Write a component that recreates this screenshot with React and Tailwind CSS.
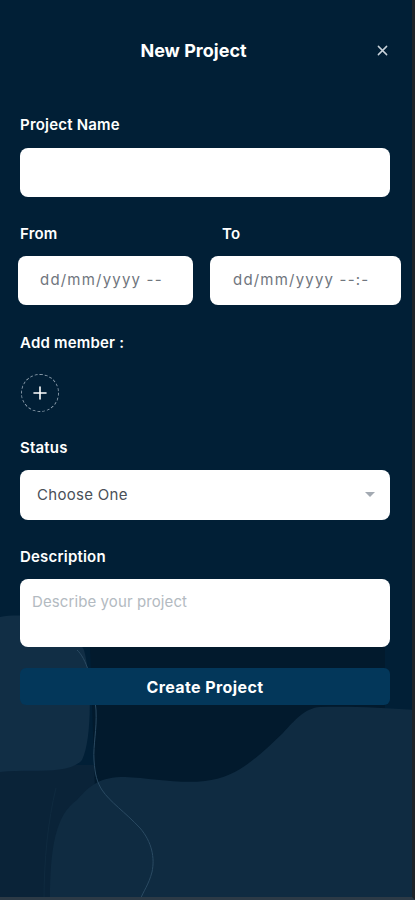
import React from "react";

// decorative waves behind the lower part of the form
function Backdrop() {
  return (
    <svg
      className="pointer-events-none absolute left-0 top-[600px] h-[300px] w-[415px]"
      viewBox="0 0 415 300"
      fill="none"
    >
      <path d="M0,165 L110,165 L110,300 L0,300 Z" fill="#0a2338" />
      <path
        d="M0,17 C30,12 70,20 84,50 C92,80 92,140 82,160 C68,176 30,168 0,172 Z"
        fill="#112e45"
      />
      <path d="M90,45 L385,45 L385,112 L200,190 L95,190 Z" fill="#021a2d" />
      <path
        d="M50,300 C50,250 55,215 77,200 C90,185 100,177 125,177 C150,178 180,184 205,181 C235,178 255,160 283,133 C295,120 305,108 320,107 C350,106 390,108 415,110 L415,300 Z"
        fill="#0f2b41"
      />
      <path
        d="M77,50 C86,58 93,80 96,110 C97,130 93,145 94,160 C95,175 97,182 102,190 C110,202 125,212 140,228 C152,242 155,258 152,272 C149,284 143,292 140,300"
        stroke="#2a4a62"
        strokeWidth="1"
      />
      <path d="M56,188 C48,220 44,260 44,300" stroke="#0f2a3f" strokeWidth="1" />
    </svg>
  );
}

function Label({ children, className = "" }) {
  return (
    <div className={"text-[15px] leading-5 font-semibold tracking-[0.2px] text-white " + className}>
      {children}
    </div>
  );
}

export default function App() {
  return (
    <div
      className="relative min-h-[900px] w-full overflow-hidden bg-[#011f36] border-r-[3px] border-b-[3px] border-r-[#1e2328] border-b-[#2c3a46]"
      style={{ fontFamily: "Inter, 'Open Sans', sans-serif" }}
    >
      <Backdrop />

      <div className="relative z-10 pl-5 pr-[22px]">
        {/* header */}
        <div className="flex h-[100px] items-center">
          <h1 className="flex-1 pr-[3px] text-center text-[18px] font-bold text-white">New Project</h1>
          <button className="mr-[-4px] flex h-6 w-6 items-center justify-center text-[#c9d2da]">
            <svg width="11" height="11" viewBox="0 0 12 12" stroke="currentColor" strokeWidth="1.6" strokeLinecap="round">
              <path d="M1.5 1.5 L10.5 10.5 M10.5 1.5 L1.5 10.5" />
            </svg>
          </button>
        </div>

        <Label className="mt-[15px]">Project Name</Label>
        <input
          type="text"
          className="mt-[13px] block h-[49px] w-full rounded-lg bg-white px-4 text-[15px] outline-none"
        />

        <div className="mt-[27px] ml-[-2px] mr-[-11px] flex gap-[17px]">
          <div className="w-[175px]">
            <Label className="pl-[2px]">From</Label>
            <div className="mt-3 flex h-[49px] items-center whitespace-nowrap rounded-lg bg-white pl-[22px] text-[15px] tracking-[1.2px] text-[#70767e]">
              dd/mm/yyyy --
            </div>
          </div>
          <div className="flex-1">
            <Label className="pl-3">To</Label>
            <div className="mt-3 flex h-[49px] items-center whitespace-nowrap rounded-lg bg-white pl-[23px] text-[15px] tracking-[1.2px] text-[#70767e]">
              dd/mm/yyyy --:-
            </div>
          </div>
        </div>

        <Label className="mt-7">Add member :</Label>
        <button className="mt-[21px] ml-[1px] flex h-[38px] w-[38px] items-center justify-center rounded-full border border-dashed border-[#8b9cab] text-white">
          <svg width="14" height="14" viewBox="0 0 14 14" stroke="currentColor" strokeWidth="1.6" strokeLinecap="round">
            <path d="M7 1 V13 M1 7 H13" />
          </svg>
        </button>

        <Label className="mt-[26px]">Status</Label>
        <div className="mt-3 flex h-[50px] items-center justify-between rounded-lg bg-white pl-[17px] pr-[15px]">
          <span className="text-[15px] tracking-[0.3px] text-[#4a5058]">Choose One</span>
          <svg width="10" height="6" viewBox="0 0 10 6">
            <path d="M0 0 H10 L5 5 Z" fill="#a3aab2" />
          </svg>
        </div>

        <Label className="mt-[27px]">Description</Label>
        <textarea
          placeholder="Describe your project"
          className="mt-3 block h-[68px] w-full resize-none rounded-lg bg-white px-3 pt-[12px] text-[15px] tracking-[0.1px] text-[#333] outline-none placeholder:text-[#b3bac1]"
        />

        <button className="mt-[21px] flex h-[37px] w-full items-center justify-center rounded-md bg-[#03375a] text-[16px] font-bold tracking-[0.4px] text-white">
          Create Project
        </button>
      </div>
    </div>
  );
}
